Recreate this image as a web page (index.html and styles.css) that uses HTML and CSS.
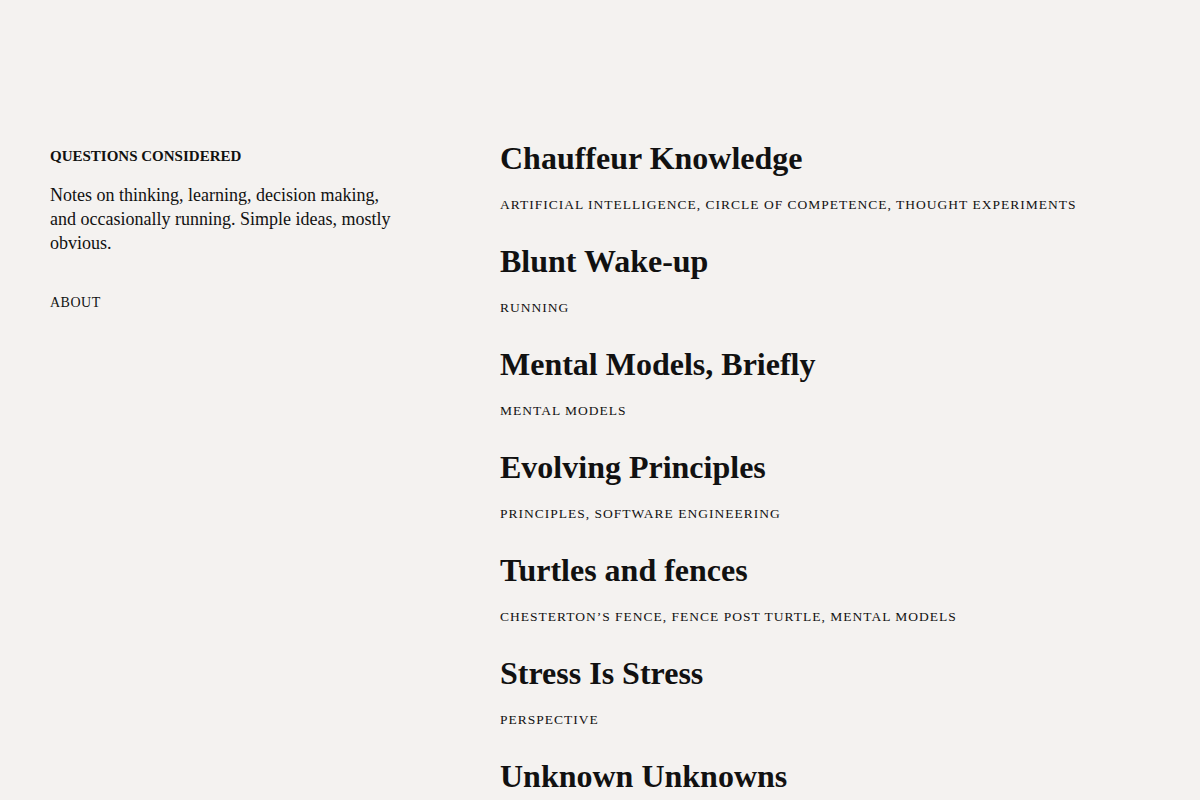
FILE: index.html
```html
<!DOCTYPE html>
<html lang="en">
<head>
  <meta charset="UTF-8" />
  <meta name="viewport" content="width=device-width, initial-scale=1" />
  <title>Questions Considered</title>
  <link rel="stylesheet" href="styles.css">
</head>
<body>
  <div class="layout">
    <aside class="sidebar">
      <h1 class="site-title">Questions Considered</h1>
      <p class="site-desc">Notes on thinking, learning, decision making, and occasionally running. Simple ideas, mostly obvious.</p>
      <nav class="site-nav">
        <a href="#">About</a>
      </nav>
    </aside>

    <main class="posts">
      <article class="post">
        <h2><a href="#">Chauffeur Knowledge</a></h2>
        <div class="tags">Artificial Intelligence, Circle of Competence, Thought Experiments</div>
      </article>
      <article class="post">
        <h2><a href="#">Blunt Wake-up</a></h2>
        <div class="tags">Running</div>
      </article>
      <article class="post">
        <h2><a href="#">Mental Models, Briefly</a></h2>
        <div class="tags">Mental Models</div>
      </article>
      <article class="post">
        <h2><a href="#">Evolving Principles</a></h2>
        <div class="tags">Principles, Software Engineering</div>
      </article>
      <article class="post">
        <h2><a href="#">Turtles and fences</a></h2>
        <div class="tags">Chesterton’s Fence, Fence Post Turtle, Mental Models</div>
      </article>
      <article class="post">
        <h2><a href="#">Stress Is Stress</a></h2>
        <div class="tags">Perspective</div>
      </article>
      <article class="post">
        <h2><a href="#">Unknown Unknowns</a></h2>
        <div class="tags">Decision Making</div>
      </article>
    </main>
  </div>
</body>
</html>
```

FILE: styles.css
```css
body {
  margin: 0;
  padding: 0;
  background-color: #f4f2f0;
  font-family: 'Liberation Serif', 'DejaVu Serif', serif;
  color: #111;
}

a {
  color: inherit;
  text-decoration: none;
}

.layout {
  display: grid;
  grid-template-columns: 450px 1fr;
  padding: 140px 50px 0;
}

.sidebar {
  max-width: 355px;
}

.site-title {
  font-size: 15px;
  font-weight: bold;
  text-transform: uppercase;
  margin: 0;
  line-height: 32px;
}

.site-desc {
  font-size: 18px;
  line-height: 24px;
  margin: 11px 0 0;
}

.site-nav {
  margin-top: 40px;
  font-size: 14px;
  text-transform: uppercase;
  letter-spacing: 0.5px;
}

.posts {
  display: flex;
  flex-direction: column;
}

.post {
  height: 103px;
}

.post h2 {
  font-size: 32px;
  line-height: 36px;
  font-weight: bold;
  margin: 0;
}

.tags {
  margin-top: 21px;
  font-size: 13.5px;
  text-transform: uppercase;
  letter-spacing: 1px;
}
```
